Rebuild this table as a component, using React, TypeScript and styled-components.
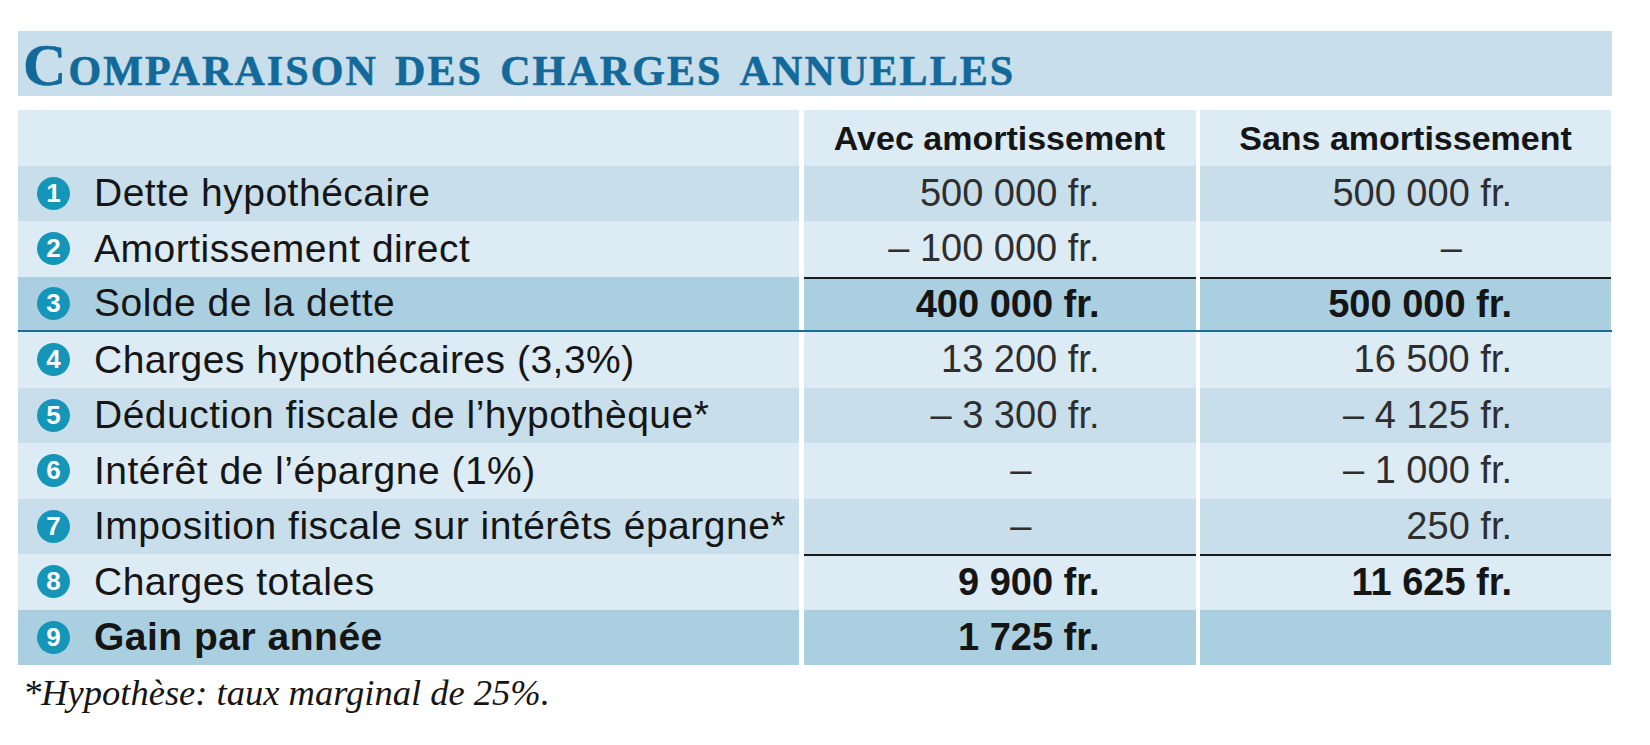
import styled, { createGlobalStyle } from 'styled-components';

type Tone = 'light' | 'mid' | 'dark';

type Line = {
    n: number
    label: string
    withAmort: string
    withoutAmort: string
    tone: Tone
    strong?: boolean
    strongLabel?: boolean
    ruleTop?: boolean
    ruleBottom?: boolean
};

const lines: Line[] = [
    { n: 1, label: 'Dette hypothécaire', withAmort: '500 000 fr.', withoutAmort: '500 000 fr.', tone: 'mid' },
    { n: 2, label: 'Amortissement direct', withAmort: '– 100 000 fr.', withoutAmort: '–', tone: 'light' },
    { n: 3, label: 'Solde de la dette', withAmort: '400 000 fr.', withoutAmort: '500 000 fr.', tone: 'dark', strong: true, ruleTop: true, ruleBottom: true },
    { n: 4, label: 'Charges hypothécaires (3,3%)', withAmort: '13 200 fr.', withoutAmort: '16 500 fr.', tone: 'light' },
    { n: 5, label: 'Déduction fiscale de l’hypothèque*', withAmort: '– 3 300 fr.', withoutAmort: '– 4 125 fr.', tone: 'mid' },
    { n: 6, label: 'Intérêt de l’épargne (1%)', withAmort: '–', withoutAmort: '– 1 000 fr.', tone: 'light' },
    { n: 7, label: 'Imposition fiscale sur intérêts épargne*', withAmort: '–', withoutAmort: '250 fr.', tone: 'mid' },
    { n: 8, label: 'Charges totales', withAmort: '9 900 fr.', withoutAmort: '11 625 fr.', tone: 'light', strong: true, ruleTop: true },
    { n: 9, label: 'Gain par année', withAmort: '1 725 fr.', withoutAmort: '', tone: 'dark', strong: true, strongLabel: true },
];

const tones: Record<Tone, string> = {
    light: '#dcebf4',
    mid: '#c8dfeb',
    dark: '#a9cfe1',
};

const GlobalStyle = createGlobalStyle`
    body {
        margin: 0;
        background: #ffffff;
        font-family: "Liberation Sans", Arial, sans-serif;
    }
`

export default function App() {
    return (
        <>
            <GlobalStyle />
            <Page>
                <TitleBar>
                    <Title>Comparaison des charges annuelles</Title>
                </TitleBar>
                <Table>
                    <Row>
                        <Cell $tone="light" />
                        <HeadCell $tone="light">Avec amortissement</HeadCell>
                        <HeadCell $tone="light">Sans amortissement</HeadCell>
                    </Row>
                    {lines.map((line) => (
                        <Row key={line.n} $ruleBottom={line.ruleBottom}>
                            <LabelCell $tone={line.tone} $strong={line.strongLabel}>
                                <Badge>{line.n}</Badge>
                                {line.label}
                            </LabelCell>
                            <ValueCell $tone={line.tone} $strong={line.strong} $ruleTop={line.ruleTop} $right={96}>
                                <Amount $dash={line.withAmort === '–' ? 68 : 0}>{line.withAmort}</Amount>
                            </ValueCell>
                            <ValueCell $tone={line.tone} $strong={line.strong} $ruleTop={line.ruleTop} $right={99}>
                                <Amount $dash={line.withoutAmort === '–' ? 50 : 0}>{line.withoutAmort}</Amount>
                            </ValueCell>
                        </Row>
                    ))}
                </Table>
                <Footnote>*Hypothèse: taux marginal de 25%.</Footnote>
            </Page>
        </>
    );
}

const Page = styled.div`
    padding: 31px 38px 0 18px;
`

const TitleBar = styled.div`
    height: 65px;
    background: #c8dfeb;
    display: flex;
    align-items: center;
    padding-left: 5px;
`

const Title = styled.h1`
    margin: 0;
    font-family: "Liberation Serif", "Times New Roman", serif;
    font-weight: bold;
    font-variant: small-caps;
    font-size: 60px;
    letter-spacing: 2.1px;
    line-height: 1;
    color: #13699a;
    padding-top: 2px;
    -webkit-text-stroke: 0.6px #13699a;
`

const Table = styled.div`
    margin-top: 14px;
    display: flex;
    flex-direction: column;
`

const Row = styled.div<{ $ruleBottom?: boolean }>`
    display: grid;
    grid-template-columns: 781px 392px 411px;
    column-gap: 4.5px;
    height: 55.5px;
    background: #ffffff;
    box-sizing: border-box;
    border-bottom: ${(p) => (p.$ruleBottom ? '2px solid #1d6d93' : 'none')};
`

const Cell = styled.div<{ $tone: Tone }>`
    background: ${(p) => tones[p.$tone]};
    box-sizing: border-box;
    display: flex;
    align-items: center;
    font-size: 38px;
    color: #151515;
`

const HeadCell = styled(Cell)`
    justify-content: center;
    font-weight: bold;
    font-size: 34px;
    padding-top: 2px;
`

const LabelCell = styled(Cell)<{ $strong?: boolean }>`
    padding-left: 19px;
    gap: 24px;
    font-size: 39px;
    font-weight: ${(p) => (p.$strong ? 'bold' : 'normal')};
    letter-spacing: 0.5px;
`

const ValueCell = styled(Cell)<{ $strong?: boolean; $ruleTop?: boolean; $right: number }>`
    justify-content: flex-end;
    padding-right: ${(p) => p.$right}px;
    font-weight: ${(p) => (p.$strong ? 'bold' : 'normal')};
    color: ${(p) => (p.$strong ? '#151515' : '#2e2e2e')};
    border-top: ${(p) => (p.$ruleTop ? '2px solid #1a1a1a' : 'none')};
`

const Amount = styled.span<{ $dash: number }>`
    display: inline-block;
    padding-right: ${(p) => p.$dash}px;
`

const Badge = styled.span`
    flex: none;
    width: 33px;
    height: 33px;
    border-radius: 50%;
    background: #1596b8;
    color: #ffffff;
    font-weight: bold;
    font-size: 26px;
    letter-spacing: 0;
    display: flex;
    align-items: center;
    justify-content: center;
`

const Footnote = styled.p`
    margin: 6px 0 0 5px;
    font-family: "Liberation Serif", "Times New Roman", serif;
    font-style: italic;
    font-size: 36.5px;
    color: #151515;
`
